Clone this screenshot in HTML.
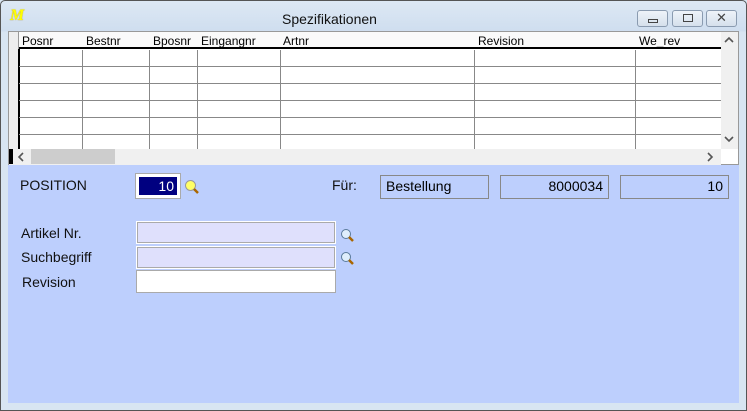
<!DOCTYPE html>
<html><head><style>
*{margin:0;padding:0;box-sizing:border-box}
body{width:747px;height:411px;overflow:hidden;background:#d8e5f2;font-family:"Liberation Sans",Arial,sans-serif;position:relative}
.a{position:absolute}
.win{left:0;top:0;width:747px;height:411px;border:1px solid #555;border-radius:5px 5px 0 0;background:linear-gradient(#dde8f4,#cfdeef 30px,#d8e5f2 31px)}
.grid{left:8px;top:31px;width:731px;height:134px;background:#fff;border:1px solid #999}
.hdr{font-size:12px;color:#000;top:2px}
.vl{width:1px;background:#888;top:18px;height:99px}
.hl{height:1px;background:#888;left:10px;width:702px}
.blue{left:8px;top:165px;width:731px;height:238px;background:#bdcffd}
.lbl{font-size:14px;color:#111}
.box{border:1px solid #888;font-size:14px;padding:2px 5px;height:24px}
.inp{border:1px solid #aaa;height:23px}
.btn{top:10px;width:31px;height:17px;border:1px solid #8a9bb0;border-radius:3px;background:linear-gradient(#eef3f9,#d5e0ec)}
.arr{font-size:14px;font-weight:bold;color:#555}
</style></head><body>
<div class="a win"></div>
<div class="a" style="left:10px;top:7px;font:bold italic 16px 'Liberation Serif',serif;color:#ff0;text-shadow:0 0 1px #a80">M</div>
<div class="a" style="left:282px;top:11px;font-size:14px;color:#111">Spezifikationen</div>
<div class="a btn" style="left:637px"><div class="a" style="left:10px;top:8px;width:10px;height:4px;border:1px solid #444"></div></div>
<div class="a btn" style="left:672px"><div class="a" style="left:10px;top:3px;width:10px;height:8px;border:1px solid #444"></div></div>
<div class="a btn" style="left:706px"><div class="a" style="left:9px;top:-1px;font-size:13px;color:#444">✕</div></div>

<div class="a grid">
 <div class="a" style="left:0;top:0;width:10px;height:117px;background:#eee;border-right:1px solid #999"></div>
 <div class="a" style="left:10px;top:0;width:702px;height:17px;background:#fafafa;border-bottom:2px solid #000"></div>
 <div class="a" style="left:9px;top:17px;width:2px;height:100px;background:#000"></div>
 <div class="a hdr" style="left:13px">Posnr</div>
 <div class="a hdr" style="left:77px">Bestnr</div>
 <div class="a hdr" style="left:144px">Bposnr</div>
 <div class="a hdr" style="left:192px">Eingangnr</div>
 <div class="a hdr" style="left:274px">Artnr</div>
 <div class="a hdr" style="left:469px">Revision</div>
 <div class="a hdr" style="left:630px">We_rev</div>
 <div class="a vl" style="left:73px"></div><div class="a vl" style="left:140px"></div><div class="a vl" style="left:188px"></div><div class="a vl" style="left:271px"></div><div class="a vl" style="left:465px"></div><div class="a vl" style="left:626px"></div>
 <div class="a hl" style="top:34px"></div><div class="a hl" style="top:51px"></div><div class="a hl" style="top:68px"></div><div class="a hl" style="top:85px"></div><div class="a hl" style="top:102px"></div>
 <div class="a" style="left:712px;top:0;width:17px;height:117px;background:#f0f0f0"></div>
 <svg class="a" style="left:715px;top:4px" width="10" height="8"><path d="M1 6 L5 2 L9 6" fill="none" stroke="#555" stroke-width="1.6"/></svg>
 <svg class="a" style="left:715px;top:103px" width="10" height="8"><path d="M1 2 L5 6 L9 2" fill="none" stroke="#555" stroke-width="1.6"/></svg>
 <div class="a" style="left:0;top:117px;width:712px;height:16px;background:#f0f0f0"></div>
 <div class="a" style="left:0;top:117px;width:4px;height:15px;background:#000"></div>
 <div class="a" style="left:22px;top:117px;width:84px;height:15px;background:#cdcdcd"></div>
 <svg class="a" style="left:8px;top:120px" width="8" height="10"><path d="M6 1 L2 5 L6 9" fill="none" stroke="#555" stroke-width="1.6"/></svg>
 <svg class="a" style="left:697px;top:120px" width="8" height="10"><path d="M2 1 L6 5 L2 9" fill="none" stroke="#555" stroke-width="1.6"/></svg>
</div>

<div class="a blue"></div>
<div class="a lbl" style="left:20px;top:177px">POSITION</div>
<div class="a" style="left:136px;top:174px;width:44px;height:24px;border:1px solid #fff;outline:1px solid #aaa;background:#fff;padding:2px"><div style="background:#000080;color:#fff;font-size:14px;text-align:right;height:18px;padding-right:3px;line-height:18px">10</div></div>
<svg class="a" style="left:184px;top:179px" width="16" height="16"><circle cx="6.5" cy="6.5" r="5" fill="#ff6" stroke="#999"/><line x1="10" y1="10" x2="14" y2="14" stroke="#a60" stroke-width="2.5"/></svg>
<div class="a lbl" style="left:332px;top:177px">Für:</div>
<div class="a box" style="left:380px;top:175px;width:109px">Bestellung</div>
<div class="a box" style="left:500px;top:175px;width:109px;text-align:right">8000034</div>
<div class="a box" style="left:620px;top:175px;width:109px;text-align:right">10</div>
<div class="a lbl" style="left:21px;top:225px">Artikel Nr.</div>
<div class="a lbl" style="left:21px;top:249px">Suchbegriff</div>
<div class="a lbl" style="left:22px;top:274px">Revision</div>
<div class="a inp" style="left:136px;top:221px;width:200px;background:#dfe0fc;border-color:#fff;outline:1px solid #aaa;outline-offset:-2px"></div>
<div class="a inp" style="left:136px;top:246px;width:200px;background:#dfe0fc;border-color:#fff;outline:1px solid #aaa;outline-offset:-2px"></div>
<div class="a inp" style="left:136px;top:270px;width:200px;background:#fff;border-color:#aaa"></div>
<svg class="a" style="left:340px;top:228px" width="16" height="16"><circle cx="6" cy="6" r="4.5" fill="#dfeefc" stroke="#5a7a9a"/><line x1="9" y1="9" x2="13" y2="13" stroke="#a60" stroke-width="2.5"/></svg>
<svg class="a" style="left:340px;top:251px" width="16" height="16"><circle cx="6" cy="6" r="4.5" fill="#dfeefc" stroke="#5a7a9a"/><line x1="9" y1="9" x2="13" y2="13" stroke="#a60" stroke-width="2.5"/></svg>
</body></html>
